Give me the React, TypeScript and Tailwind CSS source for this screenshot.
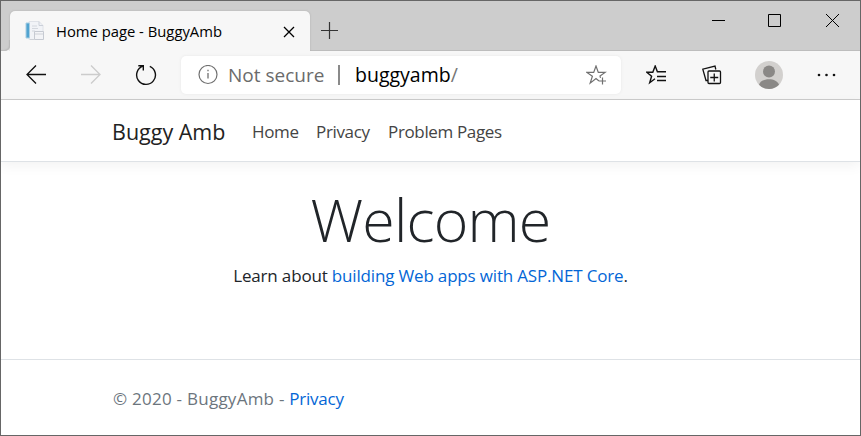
import type { ReactNode } from "react";

function Icon({ w, h, className = "", children }: { w: number; h: number; className?: string; children: ReactNode }) {
  return (
    <svg width={w} height={h} viewBox={`0 0 ${w} ${h}`} fill="none" stroke="currentColor" className={`block shrink-0 ${className}`}>
      {children}
    </svg>
  );
}

function TitleBar() {
  return (
    <div className="flex h-[50px] items-start bg-[#cdcdcd] shadow-[inset_0_-1px_0_#bdbdbd]">
      <div className="mt-[39px] h-[11px] w-[9px] bg-[#f7f7f7]">
        <div className="h-full w-full rounded-br-[5px] bg-[#cdcdcd] shadow-[inset_-1px_-1px_1px_#bdbdbd]" />
      </div>
      <div className="mt-[10px] flex h-10 w-[300px] items-center rounded-t-[5px] bg-[#f7f7f7] shadow-[0_0_2px_#aaaaaa] [clip-path:inset(-3px_-3px_0_-3px)]">
        <Icon w={22} h={22} className="ml-[14px]">
          <path d="M5 1.5h10l4 4v14H5z" fill="#f1f3f7" stroke="#dfe2e8" />
          <path d="M15 1.5v4h4" stroke="#cbd0d9" />
          <path d="M2 3h3.5v15H2z" fill="#50a3d0" stroke="#a9cfe3" />
          <path d="M8 6h5M8 8.5h6M8 11h3" stroke="#d3d7de" />
          <path d="M10.5 11.5h9v8h-9z" fill="#f3f4f7" stroke="#c6cad2" />
          <path d="M11 14h8M6 19.5h5" stroke="#cfd2d8" />
        </Icon>
        <span className="ml-[10px] w-[216px] whitespace-nowrap text-[14.8px] leading-5 text-black">Home page - BuggyAmb</span>
        <Icon w={12} h={12} className="mt-[2px] ml-[11px] text-black">
          <path d="M1 1l10 10M11 1L1 11" strokeWidth="1.3" />
        </Icon>
      </div>
      <Icon w={17} h={17} className="mt-[21px] ml-[11px] text-[#333]">
        <path d="M8.5 0v17M0 8.5h17" strokeWidth="1.2" />
      </Icon>
      <div className="mr-[21px] ml-auto flex h-[38px] items-center gap-[43px] text-black">
        <Icon w={13} h={13}>
          <path d="M0 6.5h13" />
        </Icon>
        <Icon w={13} h={13}>
          <path d="M.5.5h12v12H.5z" />
        </Icon>
        <Icon w={13} h={13} className="ml-[2px]">
          <path d="M0 0l13 13M13 0L0 13" />
        </Icon>
      </div>
    </div>
  );
}

function Toolbar() {
  return (
    <div className="flex h-[49px] items-center border-b border-[#cccccc] bg-[#f7f7f7] text-[#111]">
      <Icon w={20} h={20} className="ml-[25px]">
        <path d="M20 9.5H1M10 .5l-9 9 9 9" strokeWidth="1.3" />
      </Icon>
      <Icon w={20} h={20} className="ml-[35px] text-[#cccccc]">
        <path d="M0 9.5h19M10 .5l9 9-9 9" strokeWidth="1.3" />
      </Icon>
      <Icon w={22} h={22} className="ml-[34px]">
        <path d="M7.8 2.2A9.4 9.4 0 1 0 14.8 2.4M3.3 1.7H8.3V6.5" strokeWidth="1.4" />
      </Icon>
      <div className="ml-[24px] flex h-[38px] w-[440px] items-center rounded-[5px] bg-white shadow-[0_0_3px_#e6e6e6]">
        <Icon w={20} h={20} className="ml-[17px] text-[#707070]">
          <circle cx="10" cy="9.5" r="9" strokeWidth="1.2" />
          <path d="M10 8V13.5M10 4.7v1.6" strokeWidth="1.3" />
        </Icon>
        <span className="ml-[10px] w-[110px] whitespace-nowrap text-[19px] leading-7 text-[#6b6b6b]">Not secure</span>
        <span className="h-5 w-[2px] bg-[#8a8a8a]" />
        <span className="ml-[15px] whitespace-nowrap text-[19.5px] leading-7 text-black">
          buggyamb<span className="text-[#767676]">/</span>
        </span>
        <Icon w={21} h={21} className="mr-[14px] ml-auto text-[#707070]">
          <path d="M13 16l-3-2.4-5.8 4.5 2.2-6.8L.9 7.4h6.8L10 1l2.3 6.4h6.8l-5.1 3.7.5 1.8M16.5 12.5v7M13 16h7" strokeWidth="1.2" />
        </Icon>
      </div>
      <Icon w={21} h={20} className="ml-[25px]">
        <path d="M9 13.7l-5.3 4 1.9-6.5L.8 7.2h6L9.2 1l2.2 5.7H20M11 11.5h9M11 15.5h9" strokeWidth="1.4" />
      </Icon>
      <Icon w={20} h={20} className="ml-[35px]">
        <path d="M6 15.5H4L.8 4.2 13 1l.8 3.5" strokeWidth="1.3" />
        <rect x="6" y="6" width="12.5" height="12.5" rx="1" strokeWidth="1.3" />
        <path d="M12.25 8.5v8M8.25 12.5h8" strokeWidth="1.3" />
      </Icon>
      <Icon w={28} h={28} className="ml-[33px]">
        <circle cx="14" cy="14" r="14" fill="#d2d0ce" stroke="none" />
        <circle cx="14" cy="10.5" r="6" fill="#8a8886" stroke="none" />
        <path d="M4 23.8C6 16.3 22 16.3 24 23.8A14 14 0 0 1 4 23.8z" fill="#8a8886" stroke="none" />
      </Icon>
      <Icon w={20} h={4} className="ml-[33px]">
        <g fill="currentColor" stroke="none">
          <circle cx="3" cy="2" r="1.3" />
          <circle cx="10.5" cy="2" r="1.3" />
          <circle cx="18" cy="2" r="1.3" />
        </g>
      </Icon>
    </div>
  );
}

export default function App() {
  return (
    <div className="relative flex h-[436px] w-[861px] flex-col overflow-hidden border border-[#666] bg-white font-['Open_Sans','Noto_Sans',sans-serif] text-[17px] leading-[26px] text-[#212529]">
      <TitleBar />
      <Toolbar />
      <header className="flex h-[62px] shrink-0 items-center border-b border-[#dee2e6] bg-white pt-[2px] pl-[111px] text-[#444] shadow-[0_4px_12px_rgba(0,0,0,0.05)]">
        <span className="w-[140px] whitespace-nowrap text-[21.5px] text-[#222]">Buggy Amb</span>
        <nav className="flex whitespace-nowrap tracking-[-0.35px]">
          <a className="w-16">Home</a>
          <a className="w-[72px]">Privacy</a>
          <a>Problem Pages</a>
        </nav>
      </header>
      <main className="flex h-[197px] shrink-0 flex-col items-center pt-[20px]">
        <h1 className="whitespace-nowrap text-[59px] leading-[74px] font-light tracking-[-0.8px]">Welcome</h1>
        <p className="mt-[7px] whitespace-nowrap tracking-[-0.17px]">
          Learn about <a className="text-[#0366d6]">building Web apps with ASP.NET Core</a>.
        </p>
      </main>
      <footer className="flex flex-1 items-center border-t border-[#dee2e6] pt-[3px] pl-[112px] text-[#6c757d]">
        <span className="whitespace-nowrap tracking-[0.25px]">
          © 2020 - BuggyAmb - <a className="tracking-[-0.25px] text-[#0366d6]">Privacy</a>
        </span>
      </footer>
      <div className="absolute top-[192px] -right-px h-2 w-px bg-[#243763]" />
      <div className="absolute top-2 -left-px h-[2px] w-px bg-black" />
    </div>
  );
}
